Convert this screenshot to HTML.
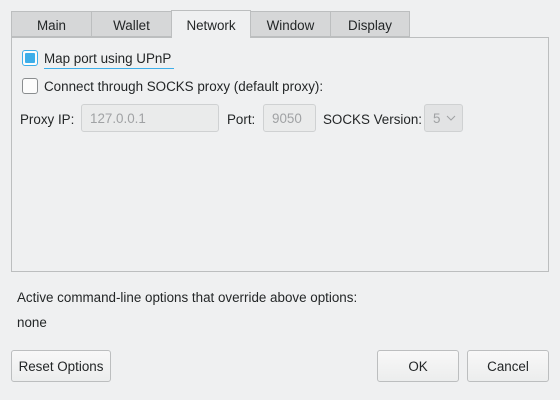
<!DOCTYPE html><html><head><style>
body{margin:0;width:560px;height:400px;background:#eff0f1;font-family:"Liberation Sans",sans-serif;font-size:13.4px;color:#232627;position:relative;overflow:hidden}
.a{position:absolute}
.tab{position:absolute;top:11px;height:26px;background:#d6d7d8;border:1px solid #bcbebf;box-sizing:border-box;text-align:center;line-height:27px}
.cb{position:absolute;width:16px;height:16px;border:1px solid #8a8d8f;border-radius:3px;background:#fcfcfc;box-sizing:border-box}
.in{position:absolute;height:28px;border:1px solid #cfd1d2;border-radius:3px;background:#eaebeb;box-sizing:border-box;color:#a0a2a4;line-height:27px;padding-left:8px}
.btn{position:absolute;height:32px;border:1px solid #bcbebf;border-radius:3px;background:linear-gradient(#f8f8f8,#eceded);box-sizing:border-box;text-align:center;line-height:31px}
</style></head><body>
<div class="a" style="left:11px;top:37px;width:538px;height:235px;border:1px solid #bcbebf;box-sizing:border-box;background:#eff0f1"></div>
<div class="tab" style="left:11px;width:81px">Main</div>
<div class="tab" style="left:91px;width:81px">Wallet</div>
<div class="tab" style="left:250px;width:81px">Window</div>
<div class="tab" style="left:330px;width:80px">Display</div>
<div class="tab" style="left:171px;width:80px;background:#eff0f1;height:28px;top:10px;border-bottom:none;line-height:29px">Network</div>
<div class="cb" style="left:22px;top:50px;border-color:#3daee9"><div class="a" style="left:2px;top:2px;width:10px;height:10px;background:#3daee9;border-radius:1px"></div></div>
<div class="a" style="left:44px;top:51px">Map port using UPnP</div>
<div class="a" style="left:44px;top:68px;width:130px;height:1px;background:#3daee9"></div>
<div class="cb" style="left:22px;top:78px"></div>
<div class="a" style="left:44px;top:79px">Connect through SOCKS proxy (default proxy):</div>
<div class="a" style="left:20px;top:112px">Proxy IP:</div>
<div class="in" style="left:81px;top:104px;width:138px">127.0.0.1</div>
<div class="a" style="left:227px;top:112px">Port:</div>
<div class="in" style="left:263px;top:104px;width:53px">9050</div>
<div class="a" style="left:323px;top:112px">SOCKS Version:</div>
<div class="in" style="left:424px;top:104px;width:39px;background:#e2e3e4">5<svg class="a" style="left:21px;top:10px" width="10" height="6"><path d="M1 1L5 5L9 1" fill="none" stroke="#a0a2a4" stroke-width="1"/></svg></div>
<div class="a" style="left:17px;top:290px">Active command-line options that override above options:</div>
<div class="a" style="left:17px;top:315px">none</div>
<div class="btn" style="left:11px;top:350px;width:100px">Reset Options</div>
<div class="btn" style="left:377px;top:350px;width:82px">OK</div>
<div class="btn" style="left:467px;top:350px;width:82px">Cancel</div>
</body></html>
